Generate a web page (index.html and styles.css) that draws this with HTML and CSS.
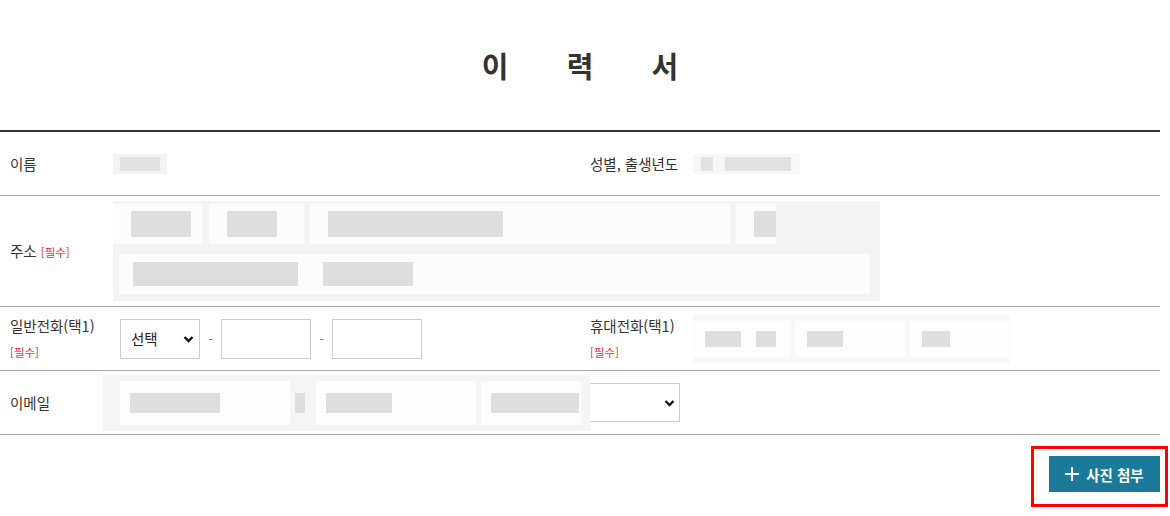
FILE: index.html
```html
<!DOCTYPE html>
<html lang="ko">
<head>
    <meta charset="UTF-8">
    <meta name="viewport" content="width=device-width, initial-scale=1.0">
    <title>이력서</title>
    <link rel="stylesheet" href="styles.css">
</head>
<body>
    <div class="wrap">
        <div class="header"><h1>이 력 서</h1></div>

        <table class="form-table">
            <colgroup>
                <col class="c-th"><col class="c-td"><col class="c-th"><col class="c-td">
            </colgroup>
            <tr class="row-1">
                <th>이름</th>
                <td><div class="mosaic m-name"><span class="ink" style="width:40px"></span></div></td>
                <th>성별, 출생년도</th>
                <td><div class="mosaic m-birth"><span class="ink" style="width:12px"></span><span class="gap" style="width:12px"></span><span class="ink" style="width:66px"></span></div></td>
            </tr>
            <tr class="row-2">
                <th>주소 <span class="req">[필수]</span></th>
                <td colspan="3">
                    <div class="mosaic m-addr">
                        <div class="addr-line">
                            <div class="cell" style="width:90px"><span class="ink" style="width:60px"></span></div>
                            <div class="cell" style="width:95px"><span class="ink" style="width:50px"></span></div>
                            <div class="cell" style="width:420px"><span class="ink" style="width:175px"></span></div>
                            <div class="cell" style="width:40px"><span class="ink" style="width:22px"></span></div>
                        </div>
                        <div class="addr-line second">
                            <div class="cell wide"><span class="ink" style="width:165px"></span><span class="gap" style="width:25px"></span><span class="ink" style="width:90px"></span></div>
                        </div>
                    </div>
                </td>
            </tr>
            <tr class="row-3">
                <th>일반전화(택1)<div class="req">[필수]</div></th>
                <td>
                    <div class="phone">
                        <div class="sel">
                            <select><option>선택</option></select>
                            <svg class="chev" width="11" height="8" viewBox="0 0 11 8"><path d="M1.5 2 L5.5 6 L9.5 2" fill="none" stroke="#111" stroke-width="2.4"/></svg>
                        </div>
                        <span class="dash">-</span>
                        <input type="text" class="num">
                        <span class="dash">-</span>
                        <input type="text" class="num">
                    </div>
                </td>
                <th>휴대전화(택1)<div class="req">[필수]</div></th>
                <td>
                    <div class="mosaic m-mobile">
                        <div class="cell" style="width:97px"><span class="ink" style="width:36px"></span><span class="gap" style="width:15px"></span><span class="ink" style="width:20px"></span></div>
                        <div class="cell" style="width:110px"><span class="ink" style="width:36px"></span></div>
                        <div class="cell" style="width:100px"><span class="ink" style="width:28px"></span></div>
                    </div>
                </td>
            </tr>
            <tr class="row-4">
                <th>이메일</th>
                <td colspan="3">
                    <div class="email">
                        <div class="mosaic m-mail">
                            <div class="cell" style="width:170px"><span class="ink" style="width:90px"></span></div>
                            <span class="ink" style="width:10px;margin:0 6px 0 0"></span>
                            <div class="cell" style="width:160px"><span class="ink" style="width:66px"></span></div>
                            <div class="cell plain" style="width:100px"><span class="ink" style="width:88px"></span></div>
                        </div>
                        <div class="sel mail-sel">
                            <select><option></option></select>
                            <svg class="chev" width="11" height="8" viewBox="0 0 11 8"><path d="M1.5 2 L5.5 6 L9.5 2" fill="none" stroke="#111" stroke-width="2.4"/></svg>
                        </div>
                    </div>
                </td>
            </tr>
        </table>

        <div class="actions">
            <div class="highlight">
                <button class="btn-photo">
                    <svg width="14" height="14" viewBox="0 0 14 14"><path d="M7 0 V14 M0 7 H14" stroke="#fff" stroke-width="2"/></svg>
                    사진 첨부
                </button>
            </div>
        </div>
    </div>
</body>
</html>
```

FILE: styles.css
```css
body {
    margin: 0;
    background: #fff;
    color: #333;
    font-family: "Noto Sans CJK KR", "Noto Sans", sans-serif;
}
.wrap { width: 1160px; padding-bottom: 40px; }
.header {
    height: 130px;
    display: flex;
    align-items: center;
    justify-content: center;
}
.header h1 {
    margin: 0;
    font-size: 29px;
    font-weight: bold;
    letter-spacing: 25px;
    padding-left: 25px;
    line-height: 1;
}

.form-table {
    width: 1160px;
    table-layout: fixed;
    border-collapse: collapse;
    border-top: 2px solid #333;
}
.c-th { width: 110px; }
.c-td { width: 470px; }
.form-table th,
.form-table td {
    border-bottom: 1px solid #aaa;
    vertical-align: middle;
    font-size: 14.5px;
    font-weight: normal;
    text-align: left;
    padding: 0 10px;
}
.form-table th { color: #333; line-height: 26px; }
.row-1 th, .row-1 td { height: 63px; }
.row-2 th, .row-2 td { height: 110px; }
.row-3 th, .row-3 td { height: 63px; }
.row-4 th, .row-4 td { height: 63px; }
.req { color: #f0283f; font-size: 11.5px; }

/* blurred (mosaic) values */
.mosaic {
    display: flex;
    align-items: center;
    background: #f6f6f6;
}
.ink {
    display: inline-block;
    height: 16px;
    background: #dedede;
}
.gap { display: inline-block; }
.cell {
    display: flex;
    align-items: center;
    justify-content: flex-start;
    background: #fcfcfc;
    padding-left: 18px;
    box-sizing: border-box;
    height: 100%;
}
.cell.plain { background: transparent; padding-left: 10px; }
.m-name {
    margin-left: -7px;
    width: 54px;
    height: 20px;
    background: #f3f3f3;
    justify-content: center;
}
.m-birth {
    margin-left: -7px;
    width: 107px;
    height: 20px;
    background: #f7f7f7;
    padding-left: 8px;
    box-sizing: border-box;
}
.m-birth .ink, .m-name .ink { height: 14px; background: #e2e2e2; }
.m-addr {
    margin-left: -7px;
    width: 767px;
    height: 100px;
    flex-direction: column;
    align-items: stretch;
    justify-content: space-between;
    padding: 3px 0;
    box-sizing: border-box;
    background: #f4f4f4;
}
.addr-line {
    display: flex;
    gap: 6px;
    height: 40px;
    align-items: stretch;
}
.addr-line .ink { height: 26px; }
.addr-line.second { padding: 0 10px 4px 6px; }
.cell.wide { flex: 1; padding-left: 14px; }
.cell.wide .ink { height: 24px; }

.phone { display: flex; align-items: center; }
.sel { position: relative; }
.sel select {
    appearance: none;
    -webkit-appearance: none;
    width: 80px;
    height: 40px;
    border: 1px solid #ccc;
    border-radius: 0;
    background: #fff;
    font-family: "Noto Sans CJK KR", sans-serif;
    font-size: 14.5px;
    color: #222;
    padding: 0 10px;
}
.chev {
    position: absolute;
    right: 6px;
    top: 16px;
    pointer-events: none;
}
.dash { color: #777; font-size: 13px; width: 21px; text-align: center; }
.num {
    width: 90px;
    height: 40px;
    box-sizing: border-box;
    border: 1px solid #ccc;
    border-radius: 0;
    margin: 0;
    padding: 0;
}

.m-mobile {
    margin-left: -7px;
    width: 317px;
    height: 48px;
    gap: 5px;
    background: #f8f8f8;
}
.m-mobile .cell { padding-left: 12px; height: 36px; background: #fdfdfd; }

.email { display: flex; align-items: center; }
.m-mail {
    margin-left: -17px;
    width: 487px;
    height: 56px;
    gap: 5px;
    padding-left: 17px;
    box-sizing: border-box;
    background: #f5f5f5;
    flex-shrink: 0;
}
.m-mail .cell { height: 44px; padding-left: 10px; background: #fdfdfd; }
.m-mail .ink { height: 20px; }
.mail-sel select { width: 90px; height: 39px; border-left-color: transparent; }
.mail-sel .chev { right: 5px; }

.actions {
    display: flex;
    justify-content: flex-end;
    padding-top: 21px;
}
.highlight { position: relative; }
.highlight::after {
    content: "";
    position: absolute;
    left: -18px;
    top: -10px;
    right: -8px;
    bottom: -15px;
    border: 3px solid #f00;
}
.btn-photo {
    display: flex;
    align-items: center;
    gap: 7px;
    width: 111px;
    height: 36px;
    justify-content: center;
    background: #1b7a99;
    color: #fff;
    border: none;
    border-radius: 0;
    font-family: "Noto Sans CJK KR", sans-serif;
    font-size: 14.5px;
    font-weight: bold;
    padding: 0;
}
```
